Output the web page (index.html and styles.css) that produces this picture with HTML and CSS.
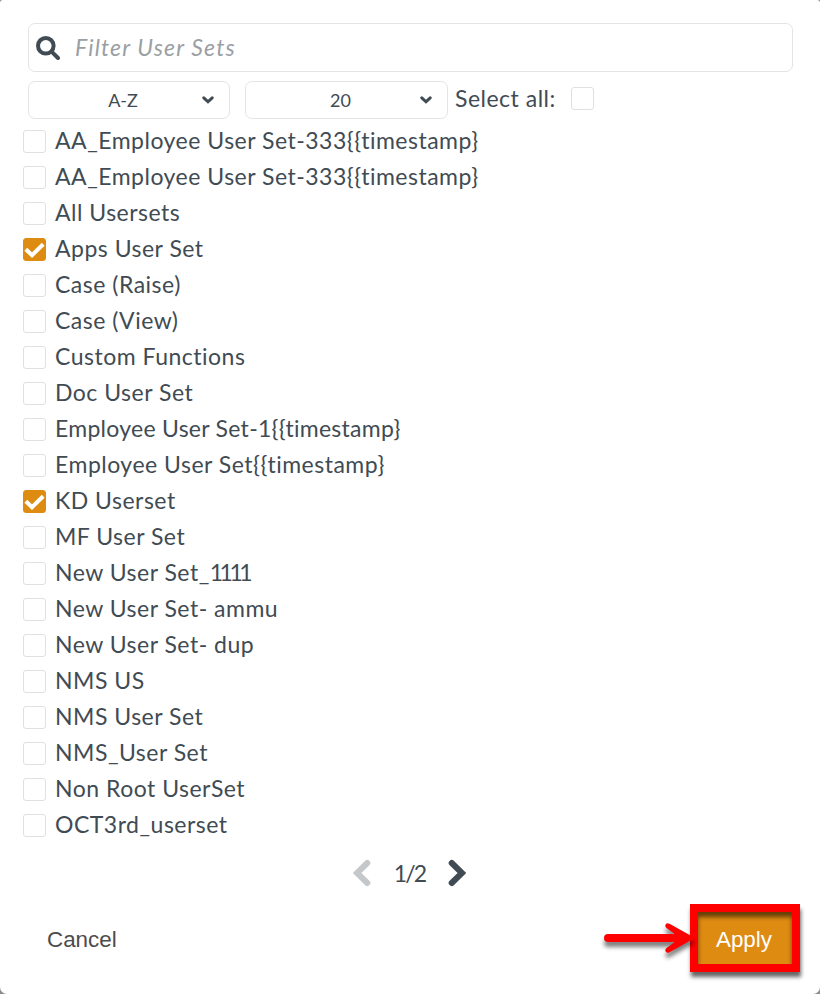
FILE: index.html
```html
<!DOCTYPE html>
<html lang="en">
<head>
  <meta charset="UTF-8" />
  <title>Filter User Sets</title>
  <link rel="stylesheet" href="styles.css">
</head>
<body>

  <main class="dialog">
    <label class="search">
      <svg class="search-icon" viewBox="0 0 24 24"><circle cx="9.8" cy="9.8" r="7.8" /><path d="M15.6 15.6L22 22" /></svg>
      <input class="search-input" type="text" placeholder="Filter User Sets">
    </label>

    <div class="toolbar">
      <div class="select"><span>A-Z</span><svg viewBox="0 0 12 8"><path d="M1.8 1.8L6 5.8L10.2 1.8" /></svg></div>
      <div class="select"><span>20</span><svg viewBox="0 0 12 8"><path d="M1.8 1.8L6 5.8L10.2 1.8" /></svg></div>
      <label class="select-all"><span>Select all:</span><input type="checkbox"></label>
    </div>

    <div class="list">
      <label><input type="checkbox"><span>AA_Employee User Set-333{{timestamp}</span></label>
      <label><input type="checkbox"><span>AA_Employee User Set-333{{timestamp}</span></label>
      <label><input type="checkbox"><span>All Usersets</span></label>
      <label><input type="checkbox" checked><svg class="tick" viewBox="0 0 23 23"><path d="M2.8 11.2L9 17.2L20.2 6.2" /></svg><span>Apps User Set</span></label>
      <label><input type="checkbox"><span>Case (Raise)</span></label>
      <label><input type="checkbox"><span>Case (View)</span></label>
      <label><input type="checkbox"><span>Custom Functions</span></label>
      <label><input type="checkbox"><span>Doc User Set</span></label>
      <label><input type="checkbox"><span class="tight">Employee User Set-1{{timestamp}</span></label>
      <label><input type="checkbox"><span>Employee User Set{{timestamp}</span></label>
      <label><input type="checkbox" checked><svg class="tick" viewBox="0 0 23 23"><path d="M2.8 11.2L9 17.2L20.2 6.2" /></svg><span>KD Userset</span></label>
      <label><input type="checkbox"><span>MF User Set</span></label>
      <label><input type="checkbox"><span>New User Set_<b>1111</b></span></label>
      <label><input type="checkbox"><span>New User Set- ammu</span></label>
      <label><input type="checkbox"><span>New User Set- dup</span></label>
      <label><input type="checkbox"><span>NMS US</span></label>
      <label><input type="checkbox"><span>NMS User Set</span></label>
      <label><input type="checkbox"><span>NMS_User Set</span></label>
      <label><input type="checkbox"><span>Non Root UserSet</span></label>
      <label><input type="checkbox"><span>OCT3rd_userset</span></label>
    </div>

    <div class="pager">
      <svg class="prev" viewBox="0 0 18 28"><path d="M14.3 4L4 14L14.3 24" /></svg>
      <span>1/2</span>
      <svg class="next" viewBox="0 0 18 28"><path d="M3.7 4L14 14L3.7 24" /></svg>
    </div>

    <footer class="actions">
      <button class="cancel">Cancel</button>
      <div class="apply-wrap">
        <button class="apply">Apply</button>
        <svg class="arrow" viewBox="0 0 100 50"><path class="shaft" d="M8 19H72" /><path class="head" d="M66 5C65 6 65 8 66.5 9L74 14.5V23.5L66.5 29C65 30 65 32 66 33C67 34 68 34 69.5 33.2L95 19L69.5 4.8C68 4 67 4 66 5Z" /></svg>
      </div>
    </footer>
  </main>

</body>
</html>
```

FILE: styles.css
```css
* {
  box-sizing: border-box;
}

body {
  margin: 0;
  background: #8c8c8c;
  color: #414b53;
  font-family: Lato, sans-serif;
  font-size: 23px;
}

svg {
  display: block;
  fill: none;
  stroke: #414b53;
  stroke-linecap: round;
}

.dialog {
  height: 994px;
  padding: 23px 27px 0 23px;
  background: #fff;
  border-radius: 3px 3px 7px 7px;
}

.search {
  display: flex;
  align-items: center;
  height: 49px;
  margin-left: 5px;
  padding-left: 7px;
  border: 1px solid #e3e4e5;
  border-radius: 7px;
}

.search-icon {
  width: 24px;
  height: 24px;
  stroke-width: 4;
}

.search-input {
  flex: 1;
  margin-left: 15px;
  padding: 0 0 2px;
  border: 0;
  outline: 0;
  background: none;
  font: italic 23px Lato, sans-serif;
  letter-spacing: 1.15px;
}

.search-input::placeholder {
  color: #9a9fa4;
}

.toolbar {
  display: flex;
  gap: 15px;
  height: 38px;
  margin: 9px 0 4px 5px;
}

.select {
  display: flex;
  align-items: center;
  width: 202px;
  padding: 0 15px 1px;
  border: 1px solid #e3e4e5;
  border-radius: 7px;
  font-size: 18px;
}

.select + .select {
  width: 203px;
}

.select span {
  flex: 1;
  text-align: center;
  margin-bottom: -1px;
}

.select svg {
  width: 12px;
  height: 8px;
  stroke-width: 3;
}

.select-all {
  display: flex;
  align-items: center;
  gap: 15px;
  height: 35px;
  margin-left: -8px;
}

.select-all span {
  letter-spacing: 0.5px;
  padding-bottom: 2px;
}

input[type="checkbox"] {
  appearance: none;
  flex: none;
  width: 23px;
  height: 23px;
  margin: 0;
  border: 1px solid #dfe0e2;
  border-radius: 3px;
}

input[type="checkbox"]:checked {
  background: #de8b12;
  border-color: #de8b12;
}

.list label {
  display: flex;
  align-items: center;
  height: 36px;
}

.list span {
  margin-left: 9px;
  padding-bottom: 2px;
  letter-spacing: 0.5px;
  white-space: nowrap;
}

.list .tight {
  letter-spacing: 0.27px;
}

.list b {
  font-weight: 400;
  letter-spacing: -3.5px;
}

.tick {
  width: 23px;
  height: 23px;
  margin-left: -23px;
  stroke: #fff;
  stroke-width: 4;
  stroke-linecap: butt;
}

.pager {
  display: flex;
  justify-content: center;
  align-items: center;
  gap: 22px;
  height: 28px;
  margin: 16px 0 0 3px;
}

.pager span {
  width: 33px;
  text-align: center;
  letter-spacing: -1.8px;
}

.pager svg {
  width: 18px;
  height: 28px;
  stroke-width: 6;
}

.pager .prev {
  stroke: #c5c8ca;
}

.actions {
  display: flex;
  justify-content: space-between;
  align-items: center;
  height: 68px;
  margin: 17px -7px 0 0;
}

button {
  padding: 0;
  border: 0;
  background: none;
  font: 22.4px "Liberation Sans", sans-serif;
  cursor: pointer;
}

.cancel {
  margin-left: 24px;
  padding-top: 3px;
  color: #4c4c4c;
}

.apply-wrap {
  position: relative;
}

.apply {
  display: block;
  width: 110px;
  height: 68px;
  padding: 3px 2px 0 0;
  border: 8px solid #f00;
  background: #de8b12;
  color: #fff;
  box-shadow: 1px 5px 4px rgba(0,0,0,0.6), inset 0 5px 4px rgba(0,0,0,0.55);
}

/* callout arrow pointing at the button */
.arrow {
  position: absolute;
  top: 15px;
  right: 100px;
  width: 100px;
  height: 50px;
  filter: drop-shadow(0 5px 2px rgba(0,0,0,0.5));
}

.arrow .shaft {
  stroke: #f00;
  stroke-width: 8;
}

.arrow .head {
  fill: #f00;
  stroke: none;
}
```
